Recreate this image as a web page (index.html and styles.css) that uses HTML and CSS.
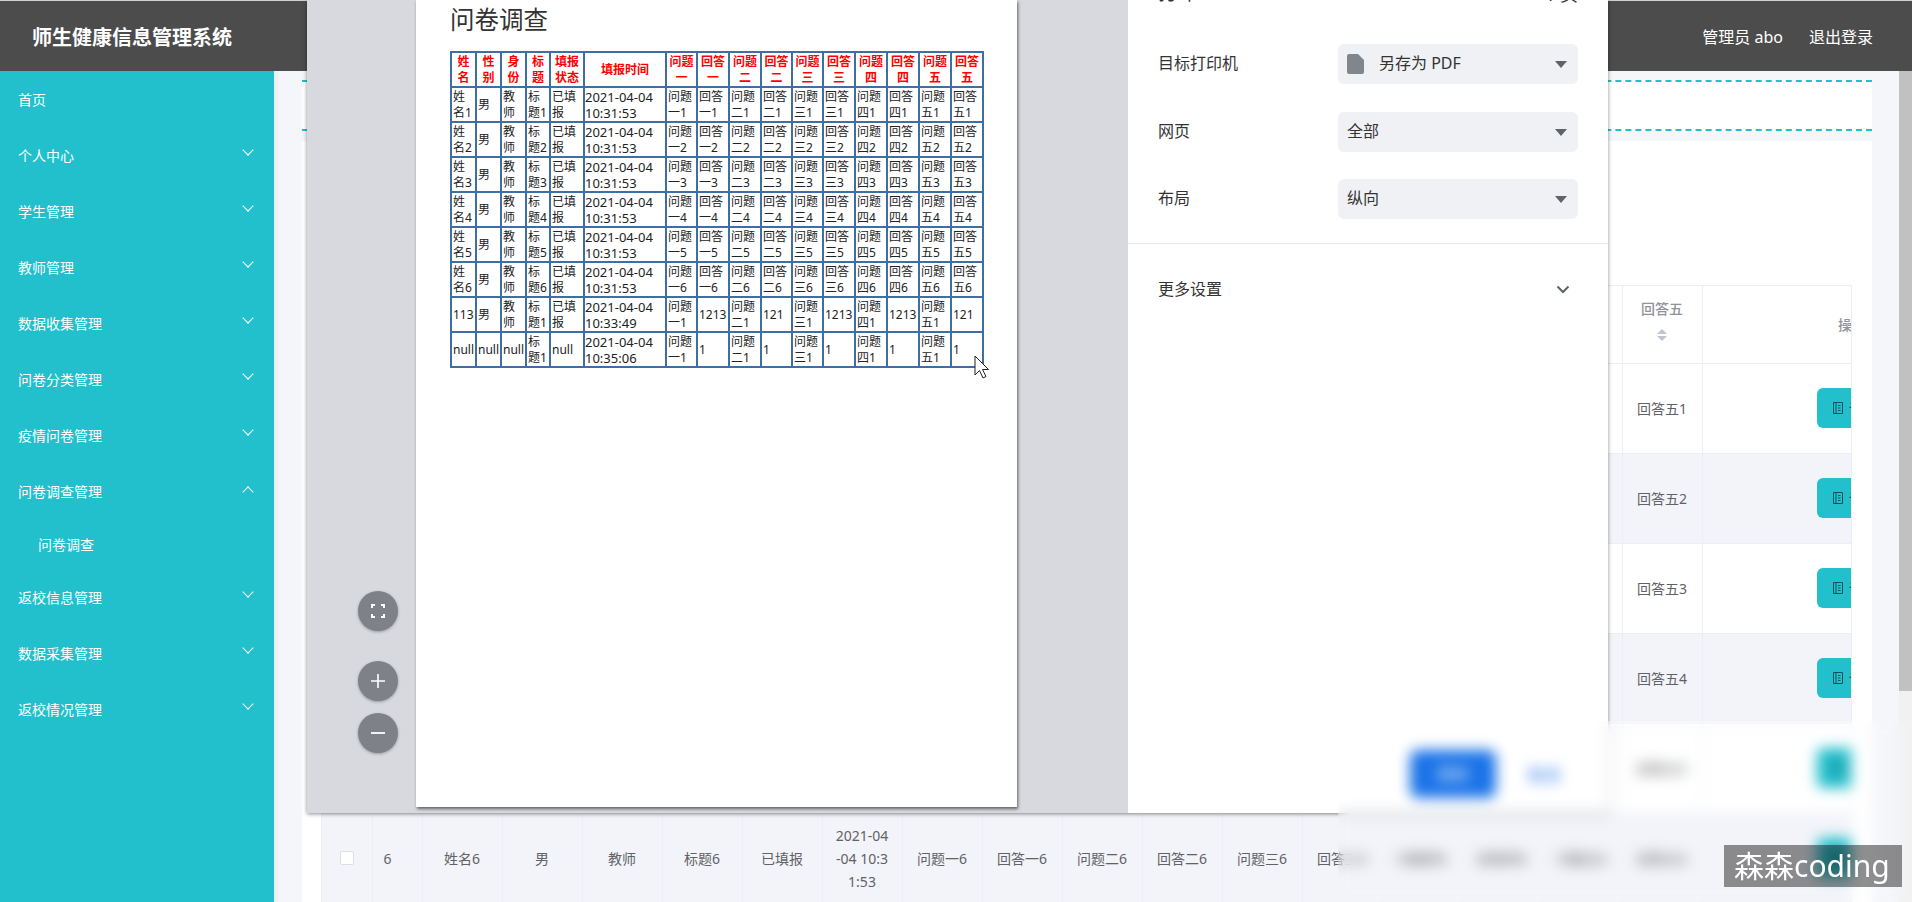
FILE: index.html
```html
<!DOCTYPE html>
<html lang="zh-CN">
<head>
	<meta charset="UTF-8">
	<title>师生健康信息管理系统</title>
	<link rel="stylesheet" href="styles.css">
</head>
<body>
	<div class="header">
		<div class="logo">师生健康信息管理系统</div>
		<div class="user">
			<span>管理员 abo</span>
			<span>退出登录</span>
		</div>
	</div>

	<div class="layout">
		<ul class="menu">
			<li>首页</li>
			<li>个人中心<i class="arrow"></i></li>
			<li>学生管理<i class="arrow"></i></li>
			<li>教师管理<i class="arrow"></i></li>
			<li>数据收集管理<i class="arrow"></i></li>
			<li>问卷分类管理<i class="arrow"></i></li>
			<li>疫情问卷管理<i class="arrow"></i></li>
			<li>问卷调查管理<i class="arrow up"></i></li>
			<li class="sub">问卷调查</li>
			<li>返校信息管理<i class="arrow"></i></li>
			<li>数据采集管理<i class="arrow"></i></li>
			<li>返校情况管理<i class="arrow"></i></li>
		</ul>

		<div class="main">
			<div class="search-card"></div>
			<div class="table-card">
				<div class="table-wrap">
					<table class="data">
						<colgroup>
							<col class="c50"><col class="c50">
							<col class="c80"><col class="c80"><col class="c80"><col class="c80">
							<col class="c80"><col class="c80"><col class="c80"><col class="c80">
							<col class="c80"><col class="c80"><col class="c80"><col class="c80">
							<col class="c80"><col class="c80"><col class="c80"><col class="c80">
							<col class="c300">
						</colgroup>
						<tr class="head">
							<th colspan="17"></th>
							<th class="sortable">回答五<span class="sort"><b></b><b class="down"></b></span></th>
							<th>操作</th>
						</tr>
						<tr>
							<td colspan="17"></td>
							<td>回答五1</td>
							<td><span class="btn"><svg width="10" height="12" viewBox="0 0 10 12"><path d="M.5.5h9v11h-9zM3 .5v11M5 3.5h2.5M5 6h2.5M5 8.500h2.500" fill="none" stroke="#12525c"/></svg>详情</span></td>
						</tr>
						<tr>
							<td colspan="17"></td>
							<td>回答五2</td>
							<td><span class="btn"><svg width="10" height="12" viewBox="0 0 10 12"><path d="M.5.5h9v11h-9zM3 .5v11M5 3.5h2.5M5 6h2.5M5 8.500h2.500" fill="none" stroke="#12525c"/></svg>详情</span></td>
						</tr>
						<tr>
							<td colspan="17"></td>
							<td>回答五3</td>
							<td><span class="btn"><svg width="10" height="12" viewBox="0 0 10 12"><path d="M.5.5h9v11h-9zM3 .5v11M5 3.5h2.5M5 6h2.5M5 8.500h2.500" fill="none" stroke="#12525c"/></svg>详情</span></td>
						</tr>
						<tr>
							<td colspan="17"></td>
							<td>回答五4</td>
							<td><span class="btn"><svg width="10" height="12" viewBox="0 0 10 12"><path d="M.5.5h9v11h-9zM3 .5v11M5 3.5h2.5M5 6h2.5M5 8.500h2.500" fill="none" stroke="#12525c"/></svg>详情</span></td>
						</tr>
						<tr>
							<td colspan="17"></td>
							<td>回答五5</td>
							<td><span class="btn"><svg width="10" height="12" viewBox="0 0 10 12"><path d="M.5.5h9v11h-9zM3 .5v11M5 3.5h2.5M5 6h2.5M5 8.500h2.500" fill="none" stroke="#12525c"/></svg>详情</span></td>
						</tr>
						<tr>
							<td><span class="check"></span></td>
							<td class="index">6</td>
							<td>姓名6</td>
							<td>男</td>
							<td>教师</td>
							<td>标题6</td>
							<td>已填报</td>
							<td class="time">2021-04-04 10:31:53</td>
							<td>问题一6</td>
							<td>回答一6</td>
							<td>问题二6</td>
							<td>回答二6</td>
							<td>问题三6</td>
							<td>回答三6</td>
							<td>问题四6</td>
							<td>回答四6</td>
							<td>问题五6</td>
							<td>回答五6</td>
							<td><span class="btn"><svg width="10" height="12" viewBox="0 0 10 12"><path d="M.5.5h9v11h-9zM3 .5v11M5 3.5h2.5M5 6h2.5M5 8.500h2.500" fill="none" stroke="#12525c"/></svg>详情</span></td>
						</tr>
					</table>
				</div>
			</div>
		</div>

		<div class="scrollbar"><div class="thumb"></div></div>
	</div>

	<!-- print dialog -->
	<div class="print">
		<div class="preview">
			<div class="paper">
				<h1>问卷调查</h1>
				<table class="sheet">
					<colgroup>
						<col class="s25"><col class="s25"><col class="s25"><col class="s24"><col class="s34"><col class="s82">
						<col class="s31"><col class="s32"><col class="s32"><col class="s31"><col class="s31">
						<col class="s32"><col class="s32"><col class="s32"><col class="s32"><col class="s32">
					</colgroup>
					<tr><th>姓名</th><th>性别</th><th>身份</th><th>标题</th><th>填报状态</th><th>填报时间</th><th>问题一</th><th>回答一</th><th>问题二</th><th>回答二</th><th>问题三</th><th>回答三</th><th>问题四</th><th>回答四</th><th>问题五</th><th>回答五</th></tr>
					<tr><td>姓名1</td><td>男</td><td>教师</td><td>标题1</td><td>已填报</td><td>2021-04-04 10:31:53</td><td>问题一1</td><td>回答一1</td><td>问题二1</td><td>回答二1</td><td>问题三1</td><td>回答三1</td><td>问题四1</td><td>回答四1</td><td>问题五1</td><td>回答五1</td></tr>
					<tr><td>姓名2</td><td>男</td><td>教师</td><td>标题2</td><td>已填报</td><td>2021-04-04 10:31:53</td><td>问题一2</td><td>回答一2</td><td>问题二2</td><td>回答二2</td><td>问题三2</td><td>回答三2</td><td>问题四2</td><td>回答四2</td><td>问题五2</td><td>回答五2</td></tr>
					<tr><td>姓名3</td><td>男</td><td>教师</td><td>标题3</td><td>已填报</td><td>2021-04-04 10:31:53</td><td>问题一3</td><td>回答一3</td><td>问题二3</td><td>回答二3</td><td>问题三3</td><td>回答三3</td><td>问题四3</td><td>回答四3</td><td>问题五3</td><td>回答五3</td></tr>
					<tr><td>姓名4</td><td>男</td><td>教师</td><td>标题4</td><td>已填报</td><td>2021-04-04 10:31:53</td><td>问题一4</td><td>回答一4</td><td>问题二4</td><td>回答二4</td><td>问题三4</td><td>回答三4</td><td>问题四4</td><td>回答四4</td><td>问题五4</td><td>回答五4</td></tr>
					<tr><td>姓名5</td><td>男</td><td>教师</td><td>标题5</td><td>已填报</td><td>2021-04-04 10:31:53</td><td>问题一5</td><td>回答一5</td><td>问题二5</td><td>回答二5</td><td>问题三5</td><td>回答三5</td><td>问题四5</td><td>回答四5</td><td>问题五5</td><td>回答五5</td></tr>
					<tr><td>姓名6</td><td>男</td><td>教师</td><td>标题6</td><td>已填报</td><td>2021-04-04 10:31:53</td><td>问题一6</td><td>回答一6</td><td>问题二6</td><td>回答二6</td><td>问题三6</td><td>回答三6</td><td>问题四6</td><td>回答四6</td><td>问题五6</td><td>回答五6</td></tr>
					<tr><td>113</td><td>男</td><td>教师</td><td>标题1</td><td>已填报</td><td>2021-04-04 10:33:49</td><td>问题一1</td><td>1213</td><td>问题二1</td><td>121</td><td>问题三1</td><td>1213</td><td>问题四1</td><td>1213</td><td>问题五1</td><td>121</td></tr>
					<tr><td>null</td><td>null</td><td>null</td><td>标题1</td><td>null</td><td>2021-04-04 10:35:06</td><td>问题一1</td><td>1</td><td>问题二1</td><td>1</td><td>问题三1</td><td>1</td><td>问题四1</td><td>1</td><td>问题五1</td><td>1</td></tr>
				</table>
			</div>

			<div class="zoom-btn fit">
				<svg width="14" height="14" viewBox="0 0 14 14" fill="none" stroke="#fff" stroke-width="2"><path d="M1 4V1h3M10 1h3v3M13 10v3h-3M4 13H1v-3"/></svg>
			</div>
			<div class="zoom-btn plus">
				<svg width="16" height="16" viewBox="0 0 16 16" fill="none" stroke="#fff" stroke-width="1.600"><path d="M8 1v14M1 8h14"/></svg>
			</div>
			<div class="zoom-btn minus">
				<svg width="16" height="16" viewBox="0 0 16 16" fill="none" stroke="#fff" stroke-width="1.800"><path d="M1 8h14"/></svg>
			</div>

			<svg class="cursor" width="16" height="24" viewBox="0 0 16 24">
				<path d="M1 1v19l4.500-4.500 3.500 7.500 3-1.500-3.500-7h6z" fill="#fff" stroke="#222" stroke-width="1"/>
			</svg>
		</div>

		<div class="panel">
			<div class="panel-head">
				<span class="panel-title">打印</span>
				<span class="panel-count">1 页</span>
			</div>
			<div class="field">
				<label>目标打印机</label>
				<div class="select">
					<svg class="doc" width="17" height="20" viewBox="0 0 17 20"><path d="M2 0h9l6 6v12a2 2 0 0 1-2 2H2a2 2 0 0 1-2-2V2a2 2 0 0 1 2-2z" fill="#80868b"/></svg>
					<span>另存为 PDF</span>
				</div>
			</div>
			<div class="field">
				<label>网页</label>
				<div class="select"><span>全部</span></div>
			</div>
			<div class="field">
				<label>布局</label>
				<div class="select"><span>纵向</span></div>
			</div>
			<div class="more">
				<span>更多设置</span>
				<svg width="14" height="9" viewBox="0 0 14 9" fill="none" stroke="#5f6368" stroke-width="2"><path d="M1.500 1.500L7 7l5.500-5.500"/></svg>
			</div>
			<div class="panel-foot">
				<span class="save">保存</span>
				<span class="cancel">取消</span>
			</div>
		</div>
	</div>

	<div class="mosaic"></div>
	<div class="watermark">森森coding</div>
</body>
</html>
```

FILE: styles.css
```css
*{
	margin: 0;
	padding: 0;
	box-sizing: border-box;
}
ul{
	list-style: none;
}
html, body{
	height: 902px;
	overflow: hidden;
}
body{
	position: relative;
	font-family: "Noto Sans", "Noto Sans CJK SC", sans-serif;
	font-size: 14px;
	color: #606266;
	background: #f5f6fa;
}

/* top bar */
.header{
	height: 71px;
	border-top: 1px solid #d0d0d0;
	background: #4c4c4c;
	color: #fff;
	display: flex;
	justify-content: space-between;
	align-items: center;
	padding: 0 39px 0 32px;
}
.logo{
	font-size: 20px;
	font-weight: 700;
}
.user{
	display: flex;
	gap: 26px;
	font-size: 16px;
}

.layout{
	display: flex;
	height: 831px;
}

/* left menu */
.menu{
	width: 274px;
	flex: none;
	background: #22c0cc;
	color: #fff;
}
.menu li{
	height: 56px;
	padding: 0 22px 1px 18px;
	display: flex;
	justify-content: space-between;
	align-items: center;
}
.menu li.sub{
	height: 50px;
	padding-left: 38px;
}
.arrow{
	width: 8px;
	height: 8px;
	margin-top: -9px;
	border-right: 1px solid #fff;
	border-bottom: 1px solid #fff;
	transform: rotate(45deg);
}
.arrow.up{
	margin-top: 3px;
	transform: rotate(225deg);
}

/* page behind the dialog */
.main{
	flex: 1;
	min-width: 0;
	border-left: 4px solid #eef0f3;
	padding: 9px 27px 0 24px;
}
.search-card{
	height: 51px;
	background: #fff;
	border-top: 2px dashed #22c0cc;
	border-bottom: 2px dashed #22c0cc;
}
.table-card{
	height: 761px;
	margin-top: 10px;
	padding: 144px 20px 0 19px;
	background: #fff;
}
.table-wrap{
	height: 617px;
	overflow: hidden;
	border-top: 1px solid #ebeef5;
	border-left: 1px solid #ebeef5;
	border-right: 1px solid #ebeef5;
}
.data{
	width: 1630px;
	table-layout: fixed;
	border-collapse: collapse;
}
.c50{ width: 50px; }
.c80{ width: 80px; }
.c300{ width: 300px; }
.data th, .data td{
	border-right: 1px solid #ebeef5;
	border-bottom: 1px solid #ebeef5;
	padding: 0 12px;
	text-align: center;
	line-height: 23px;
	word-break: break-all;
}
.data tr{
	height: 90px;
}
.data tr.head{
	height: 77px;
}
.data th{
	color: #909399;
	font-weight: 500;
}
.data th.sortable{
	padding-bottom: 8px;
}
.data tr:nth-child(2n+1):not(.head) td{
	background: #f3f4f9;
}
.data td.index{
	padding-left: 11px;
	text-align: left;
}
.sort{
	display: block;
	height: 14px;
	margin: 9px auto 0;
	width: 10px;
}
.sort b{
	display: block;
	width: 0;
	height: 0;
	border-left: 5px solid transparent;
	border-right: 5px solid transparent;
	border-bottom: 5px solid #c0c4cc;
	margin-bottom: 2px;
}
.sort b.down{
	border-bottom: 0;
	border-top: 5px solid #c0c4cc;
}
.check{
	display: block;
	width: 14px;
	height: 14px;
	background: #fff;
	border: 1px solid #dcdfe6;
	border-radius: 2px;
	margin: 0 auto;
}
.btn{
	display: inline-flex;
	align-items: center;
	gap: 6px;
	width: 70px;
	height: 40px;
	padding-left: 16px;
	border-radius: 6px;
	background: #22c0cc;
	color: #12525c;
	white-space: nowrap;
	vertical-align: middle;
}

.scrollbar{
	width: 13px;
	flex: none;
	background: #f1f1f1;
}
.thumb{
	height: 620px;
	background: #c1c1c1;
}

/* print dialog, over the page */
.print{
	position: absolute;
	left: 307px;
	top: 0;
	width: 1301px;
	height: 813px;
	display: flex;
	box-shadow: 0 1px 4px rgba(0,0,0,.45);
}
.preview{
	position: relative;
	width: 821px;
	height: 813px;
	padding-left: 109px;
	background: #d8d9de;
	color: #222;
}
.paper{
	width: 601px;
	height: 807px;
	padding: 6px 34px 0;
	background: #fff;
	box-shadow: 1px 2px 3px rgba(0,0,0,.55);
}
.paper h1{
	font-size: 24.500px;
	font-weight: 400;
	line-height: 28px;
	margin-bottom: 17px;
	color: #333;
}
.sheet{
	width: 532px;
	table-layout: fixed;
	border-collapse: collapse;
	font-size: 12px;
	line-height: 16px;
}
.s24{ width: 24px; }
.s25{ width: 25px; }
.s31{ width: 31px; }
.s32{ width: 32px; }
.s34{ width: 34px; }
.s82{ width: 82px; }
.sheet tr{
	height: 35px;
}
.sheet th, .sheet td{
	border: 2px solid #3d6fa5;
	padding: 0 1px;
}
.sheet td:nth-child(6){
	font-size: 13px;
	padding-left: 0;
}
.sheet th{
	color: #f00;
	font-weight: 700;
	text-align: center;
}
.zoom-btn{
	position: absolute;
	left: 51px;
	width: 40px;
	height: 40px;
	border-radius: 50%;
	background: #7e8288;
	box-shadow: 0 1px 3px rgba(0,0,0,.3);
	display: flex;
	align-items: center;
	justify-content: center;
}
.fit{ top: 591px; }
.plus{ top: 661px; }
.minus{ top: 713px; }
.cursor{
	position: absolute;
	left: 667px;
	top: 355px;
}

.panel{
	width: 480px;
	height: 813px;
	background: #fff;
	overflow: hidden;
	display: flex;
	flex-direction: column;
	color: #333;
	font-size: 16px;
}
.panel-head{
	display: flex;
	justify-content: space-between;
	align-items: center;
	height: 24px;
	flex: none;
	margin: -21px 30px 41px;
}
.panel-title{
	font-size: 20px;
}
.panel-count{
	font-size: 18px;
	padding-top: 3px;
}
.field{
	display: flex;
	align-items: center;
	flex: none;
	height: 40px;
	margin: 0 30px 27.5px;
}
.field label{
	width: 180px;
	padding-bottom: 4px;
}
.select{
	position: relative;
	width: 240px;
	height: 40px;
	padding-left: 9px;
	display: flex;
	align-items: center;
	gap: 15px;
	border-radius: 6px;
	background: #f0f1f4;
}
.select span{
	padding-bottom: 4px;
}
.select:after{
	content: "";
	position: absolute;
	right: 11px;
	top: 17px;
	border-left: 6px solid transparent;
	border-right: 6px solid transparent;
	border-top: 7px solid #5f6368;
}
.more{
	display: flex;
	justify-content: space-between;
	align-items: center;
	flex: none;
	height: 92px;
	margin-top: -3.500px;
	padding: 0 38px 0 30px;
	border-top: 1px solid #e8eaed;
}
.more span{
	padding-bottom: 4px;
}
.panel-foot{
	margin-top: auto;
	padding: 0 48px 15px 0;
	display: flex;
	justify-content: flex-end;
	align-items: center;
	gap: 32px;
}
.save{
	width: 86px;
	height: 48px;
	line-height: 48px;
	text-align: center;
	border-radius: 8px;
	background: #1a73e8;
	color: #fff;
}
.cancel{
	color: #1a73e8;
}

/* blurred corner of the recording */
.mosaic{
	position: absolute;
	left: 1338px;
	top: 721px;
	right: 0;
	bottom: 0;
	backdrop-filter: blur(7px);
}
.watermark{
	position: absolute;
	left: 1724px;
	top: 845px;
	width: 178px;
	height: 42px;
	padding-left: 10px;
	line-height: 42px;
	background: rgba(20,20,20,.47);
	color: #fff;
	font-size: 30px;
	white-space: nowrap;
	overflow: hidden;
}
```
